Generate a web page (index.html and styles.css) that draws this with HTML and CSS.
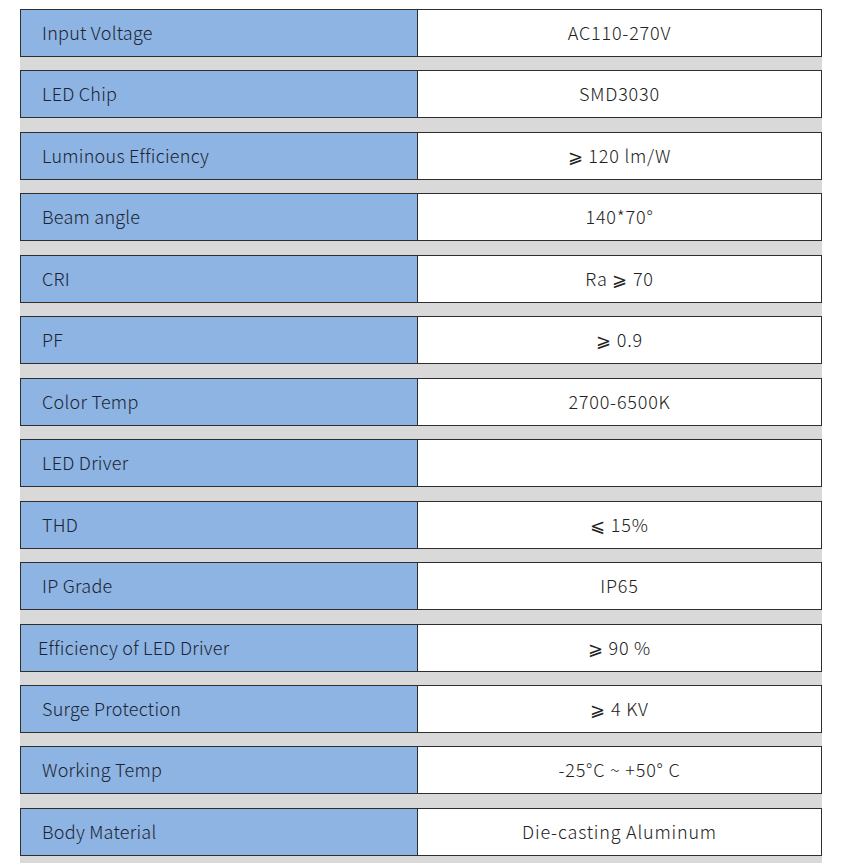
FILE: index.html
```html
<!DOCTYPE html>
<html>
<head>
<meta charset="utf-8">
<link rel="stylesheet" href="styles.css">
</head>
<body>
<div class="sheet">
  <div class="row"><div class="key">Input Voltage</div><div class="val">AC110-270V</div></div>
  <div class="row"><div class="key">LED Chip</div><div class="val">SMD3030</div></div>
  <div class="row"><div class="key">Luminous Efficiency</div><div class="val">⩾ 120 lm/W</div></div>
  <div class="row"><div class="key">Beam angle</div><div class="val">140*70°</div></div>
  <div class="row"><div class="key">CRI</div><div class="val">Ra ⩾ 70</div></div>
  <div class="row"><div class="key">PF</div><div class="val">⩾ 0.9</div></div>
  <div class="row"><div class="key">Color Temp</div><div class="val">2700-6500K</div></div>
  <div class="row"><div class="key">LED Driver</div><div class="val"></div></div>
  <div class="row"><div class="key">THD</div><div class="val">⩽ 15%</div></div>
  <div class="row"><div class="key">IP Grade</div><div class="val">IP65</div></div>
  <div class="row"><div class="key key-wide">Efficiency of LED Driver</div><div class="val">⩾ 90 %</div></div>
  <div class="row"><div class="key">Surge Protection</div><div class="val">⩾ 4 KV</div></div>
  <div class="row"><div class="key">Working Temp</div><div class="val">-25°C ~ +50° C</div></div>
  <div class="row"><div class="key">Body Material</div><div class="val">Die-casting Aluminum</div></div>
</div>
</body>
</html>
```

FILE: styles.css
```css
html, body {
  margin: 0;
  padding: 0;
  background: #ffffff;
}
body {
  font-family: "Noto Sans CJK SC", "Noto Sans", sans-serif;
  font-size: 18px;
  font-weight: 300;
  color: #222222;
}
.sheet {
  margin: 9px 0 0 20px;
  width: 802px;
  background: #d9d9d9;
  padding-bottom: 20px;
}
.row {
  display: grid;
  grid-template-columns: 397px 1fr;
  height: 48px;
  box-sizing: border-box;
  border: 1px solid #2e2e2e;
  margin-bottom: 13.46px;
}
.key {
  background: #8db4e2;
  border-right: 1px solid #2e2e2e;
  display: flex;
  align-items: center;
  padding-left: 21px;
  padding-bottom: 2px;
  letter-spacing: 0.25px;
  color: #1c2333;
}
.key-wide {
  padding-left: 17px;
}
.val {
  background: #ffffff;
  display: flex;
  align-items: center;
  justify-content: center;
  padding-bottom: 2px;
  letter-spacing: 0.8px;
}
```
